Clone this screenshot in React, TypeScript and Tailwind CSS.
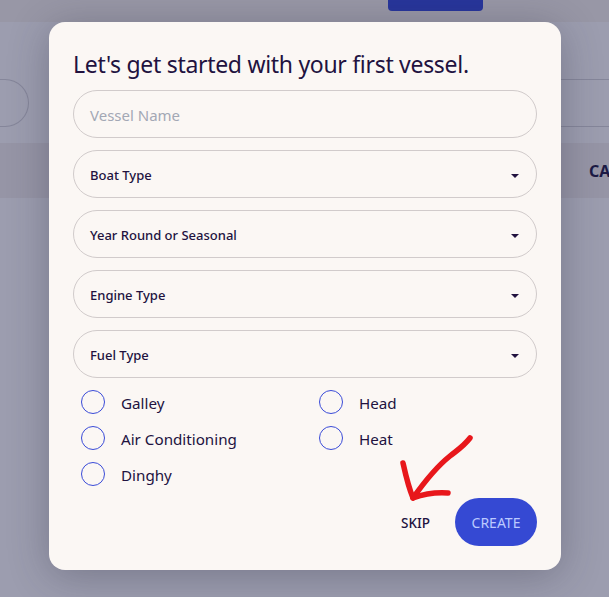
const selects = ["Boat Type", "Year Round or Seasonal", "Engine Type", "Fuel Type"]
const amenities = ["Galley", "Head", "Air Conditioning", "Heat", "Dinghy"]

function Page() {
  return (
    <div className="h-[597px] overflow-hidden bg-[#9c9daf]">
      <div className="h-[22px] bg-[#9897a6] flex justify-end pr-[126px]">
        <div className="w-[95px] h-[11px] rounded-b-sm bg-[#27359b]" />
      </div>
      <div className="h-[121px] pt-[57px] flex justify-between">
        <div className="w-[29px] h-[48px] rounded-r-full border border-l-0 border-[#85869a]" />
        <div className="w-[60px] h-[48px] border-y border-[#85869a]" />
      </div>
      <div className="h-[55px] bg-[#9695a6] flex items-center justify-end">
        <span className="text-base font-bold text-[#1c1a45] w-[20px] overflow-hidden whitespace-nowrap">CATEGORY</span>
      </div>
    </div>
  )
}

export default function App() {
  return (
    <div className="relative w-[609px] h-[597px] overflow-hidden font-['Noto_Sans',sans-serif] text-[#22123f]">
      <Page />
      <div className="absolute left-[49px] top-[22px] w-[512px] h-[548px] rounded-2xl bg-[#fbf7f4] px-6 pt-6 shadow-[0_6px_40px_rgba(40,40,60,0.32)]">
        <h2 className="text-[23px] tracking-[-0.3px] leading-[36px] mb-2">Let's get started with your first vessel.</h2>
        <div className="flex flex-col gap-3">
          <div className="h-12 rounded-full border border-[#d1cbcb] px-4 pt-0.5 flex items-center text-[15px] text-[#a3a8b5]">
            Vessel Name
          </div>
          {selects.map((s) => (
            <div key={s} className="h-12 rounded-full border border-[#d1cbcb] pl-4 pr-[17px] pt-1 flex items-center justify-between text-[13px] font-medium">
              <span>{s}</span>
              <span className="w-0 h-0 border-x-[4px] border-x-transparent border-t-[4px] border-t-[#22123f]" />
            </div>
          ))}
        </div>
        <div className="grid grid-cols-[238px_1fr] gap-y-3 mt-3 pl-2">
          {amenities.map((a) => (
            <label key={a} className="flex items-center gap-4 h-6 text-[15.2px]">
              <span className="w-6 h-6 rounded-full border border-[#3a4bd8]" />
              <span className="leading-6 pt-[1px]">{a}</span>
            </label>
          ))}
        </div>
        <div className="absolute right-6 bottom-6 flex items-center gap-[25px]">
          <button className="text-[13.5px] font-medium pt-[3px]">SKIP</button>
          <button className="w-[82px] h-12 rounded-full bg-[#3549d3] pt-[2px] text-sm text-[#bccaff]">CREATE</button>
        </div>
      </div>
      <svg className="absolute left-0 top-0 pointer-events-none" width="609" height="597" fill="none" stroke="#e8171b" strokeWidth="5.5" strokeLinecap="round" strokeLinejoin="round">
        <path d="M470 438 C463 447 456 451 450 456 C440 464 425 481 413 498" />
        <path d="M403 463 C405 472 408 486 413 498 C424 494 435 492 448 493" />
      </svg>
    </div>
  )
}
